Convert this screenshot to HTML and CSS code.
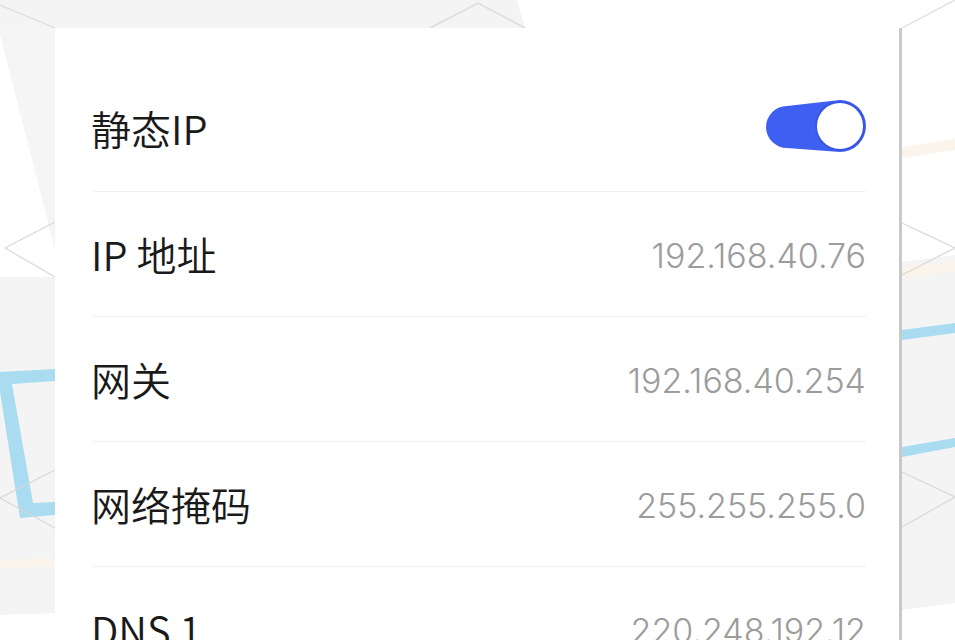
FILE: index.html
```html
<!DOCTYPE html>
<html lang="zh-CN">
<head>
<meta charset="utf-8">
<title>静态IP</title>
<link rel="stylesheet" href="styles.css">
</head>
<body>
<svg class="backdrop" width="955" height="640" viewBox="0 0 955 640" aria-hidden="true">
  <rect x="0" y="0" width="955" height="640" fill="#ffffff"/>
  <polygon points="0,0 517,0 525,28 0,28" fill="#f4f4f4"/>
  <polygon points="0,28 55,28 55,250 0,34" fill="#f5f5f5"/>
  <polygon points="0,277 55,277 55,613 0,615" fill="#f4f4f4"/>
  <polygon points="0,560 55,558 55,566 0,568" fill="#faf4ea"/>
  <polygon points="0,372 55,369 55,381 12,384 33,503 55,502 55,515 20,518 0,392" fill="#a9dcf0"/>
  <polyline points="0,5 55,28" fill="none" stroke="#dcdcdc" stroke-width="1.2"/>
  <polyline points="55,222 5,248 55,277" fill="none" stroke="#d8d8d8" stroke-width="1.2"/>
  <polyline points="55,470 0,498 55,528" fill="none" stroke="#d8d8d8" stroke-width="1.2"/>
  <polyline points="430,28 478,3 525,28" fill="none" stroke="#dcdcdc" stroke-width="1.5"/>
  <polygon points="902,262 955,255 955,603 902,610" fill="#f4f4f4"/>
  <polygon points="902,147 955,139 955,150 902,158" fill="#faf4ea"/>
  <polygon points="902,267 955,261 955,271 902,278" fill="#faf4ea"/>
  <polygon points="902,330 955,323 955,333 902,340" fill="#a9dcf0"/>
  <polygon points="902,447 955,438 955,447 902,457" fill="#a9dcf0"/>
  <polyline points="902,28 955,0" fill="none" stroke="#dcdcdc" stroke-width="1.2"/>
  <polyline points="902,223 955,248 902,275" fill="none" stroke="#d8d8d8" stroke-width="1.2"/>
  <polyline points="902,472 955,497 902,527" fill="none" stroke="#d8d8d8" stroke-width="1.2"/>
</svg>

<main class="card">
  <div class="row row-first">
    <span class="label">静态IP</span>
    <svg class="toggle" width="102" height="56" viewBox="0 0 102 56" role="switch" aria-checked="true">
      <path d="M22,7 L75,1 A26,26 0 0 1 75,53 L22,49 A21,21 0 0 1 22,7 Z" fill="#3f5ef2"/>
      <circle cx="75" cy="27" r="24" fill="#ffffff" stroke="#3a55e2" stroke-width="2"/>
    </svg>
  </div>
  <div class="row">
    <span class="label">IP 地址</span>
    <span class="value">192.168.40.76</span>
  </div>
  <div class="row">
    <span class="label">网关</span>
    <span class="value">192.168.40.254</span>
  </div>
  <div class="row">
    <span class="label">网络掩码</span>
    <span class="value">255.255.255.0</span>
  </div>
  <div class="row">
    <span class="label">DNS 1</span>
    <span class="value">220.248.192.12</span>
  </div>
</main>
</body>
</html>
```

FILE: styles.css
```css
html, body {
  margin: 0;
  padding: 0;
  width: 955px;
  height: 640px;
  overflow: hidden;
  background: #ffffff;
}

body {
  position: relative;
  font-family: "Noto Sans CJK SC", "Noto Sans", sans-serif;
}

.backdrop {
  position: absolute;
  left: 0;
  top: 0;
  display: block;
}

.card {
  position: relative;
  z-index: 1;
  box-sizing: border-box;
  margin: 28px 0 0 55px;
  width: 847px;
  height: 700px;
  padding: 36px 33px 0 38px;
  background: #ffffff;
  border-right: 3px solid #c9c9c9;
  display: flex;
  flex-direction: column;
}

.row {
  display: flex;
  align-items: center;
  justify-content: space-between;
  height: 124px;
  border-top: 1px solid #f0f0f0;
  flex: none;
}

.row-first {
  border-top: none;
  height: 127px;
}

.label {
  font-size: 40px;
  font-weight: 350;
  color: #1a1a1a;
  line-height: 1;
  margin-left: -2px;
}

.value {
  font-family: "Inter", "Liberation Sans", sans-serif;
  font-weight: 300;
  font-size: 34px;
  color: #9c9c9c;
  line-height: 1;
  margin-top: 3px;
}

.toggle {
  display: block;
  margin-right: -1px;
  margin-bottom: 2px;
}
```
